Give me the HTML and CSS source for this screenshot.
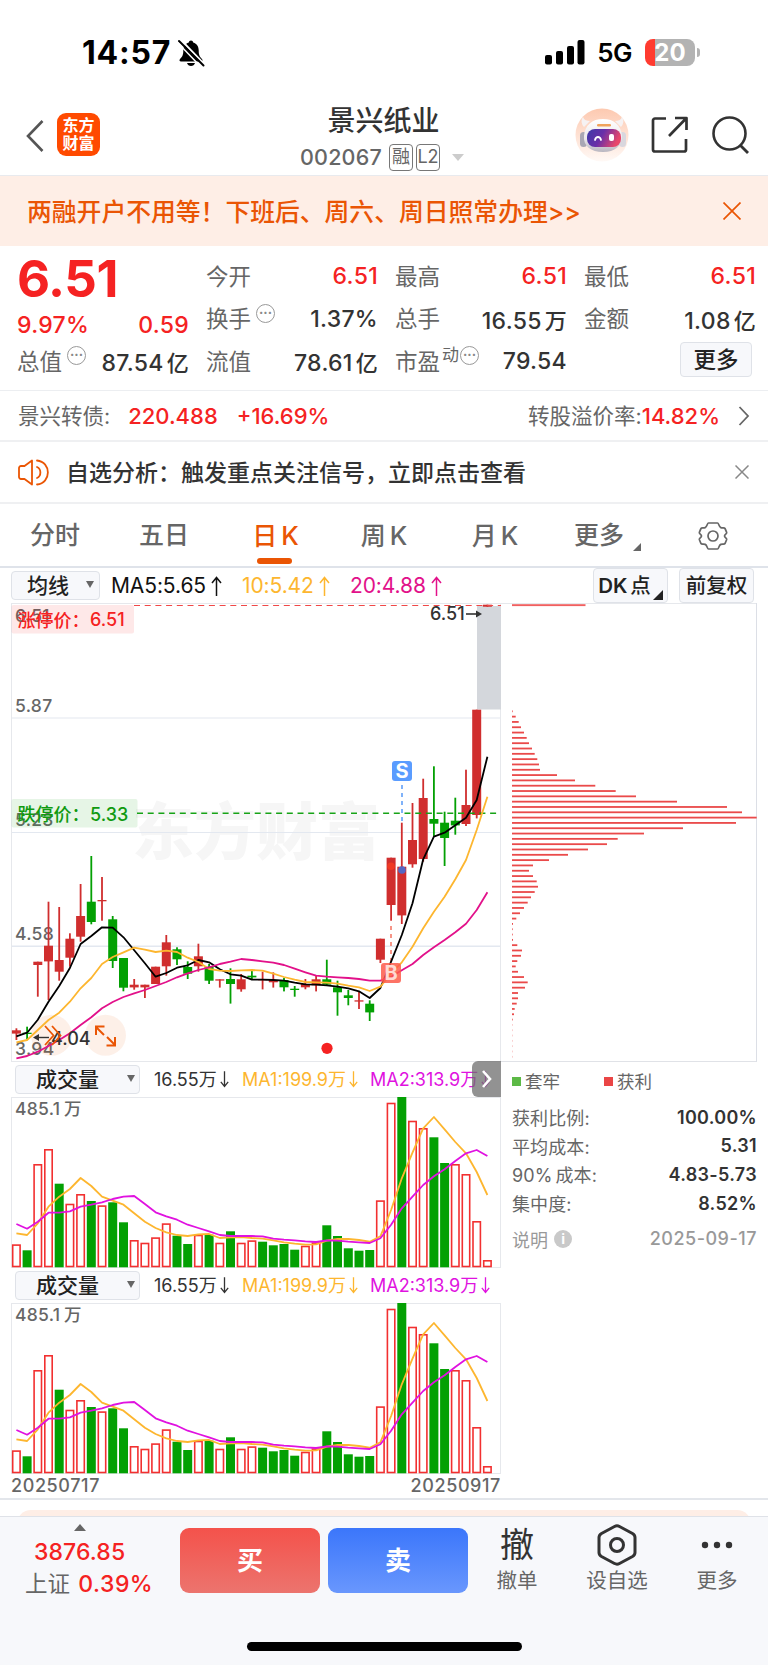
FILE: index.html
```html
<!DOCTYPE html>
<html lang="zh-CN">
	<head>
		<meta charset="UTF-8">
		<title>景兴纸业 002067</title>
		<link rel="stylesheet" href="styles.css">
	</head>
	<body>
		<svg width="0" height="0" class="defs">
			<symbol id="up" viewBox="0 0 11 20"><path d="M5.500 20V1.500M1 7l4.500-5.500L10 7" fill="none" stroke="currentColor" stroke-width="1.500"/></symbol>
			<symbol id="dn" viewBox="0 0 11 20"><path d="M5.500 0v18.500M1 13l4.500 5.500L10 13" fill="none" stroke="currentColor" stroke-width="1.600"/></symbol>
		</svg>
		<!--状态栏-->
		<div class="status">
			<span class="time">14:57</span>
			<svg class="bell" width="28" height="28" viewBox="0 0 28 28">
				<path d="M14 1.500c1.300 0 2 .8 2.200 2 3.800 1 5.500 4.200 5.500 8 0 5 1.300 6.500 3.300 8.500 1 1.200.5 2.500-1 2.500H4c-1.500 0-2-1.300-1-2.500 2-2 3.300-3.500 3.300-8.500 0-3.800 1.700-7 5.500-8 .2-1.200.9-2 2.200-2z"/>
				<path d="M10 24h8c-.6 2-2 3-4 3s-3.400-1-4-3z"/>
				<path d="M4.500 1.500L28 26" stroke="#fff" stroke-width="2"/>
				<path d="M2 2l24.500 24.500" stroke="#000" stroke-width="2" stroke-linecap="round"/>
				<path d="M.5 3.500L24 28" stroke="#fff" stroke-width="1.500"/>
			</svg>
			<svg class="signal" width="40" height="25" viewBox="0 0 40 25">
				<rect x="0" y="15" width="7" height="9.500" rx="2"/>
				<rect x="11" y="11" width="7" height="13.500" rx="2"/>
				<rect x="22" y="6" width="7" height="18.500" rx="2"/>
				<rect x="32.500" y="0" width="7" height="24.500" rx="2"/>
			</svg>
			<span class="net">5G</span>
			<div class="battery"><span>20</span></div>
			<i class="nub"></i>
		</div>

		<!--标题栏-->
		<div class="header">
			<svg class="back" width="18" height="32" viewBox="0 0 18 32"><path d="M16.500 1L2 16l14.500 15" fill="none" stroke="#555" stroke-width="2.600"/></svg>
			<div class="logo">东方<br>财富</div>
			<div class="title">
				<h1>景兴纸业</h1>
				<div class="code">
					<span class="num">002067</span><span class="tag">融</span><span class="tag">L2</span><i class="down"></i>
				</div>
			</div>
			<svg class="robot" width="54" height="54" viewBox="0 0 54 54">
				<defs>
					<linearGradient id="halo" x1="0" y1="0" x2="0" y2="1"><stop offset="0" stop-color="#fdc9b0"/><stop offset="1" stop-color="#fff9f6"/></linearGradient>
					<linearGradient id="face" x1="0" y1="0" x2="1" y2="0.300"><stop offset="0" stop-color="#3d3aa8"/><stop offset="0.500" stop-color="#6a2fa8"/><stop offset="1" stop-color="#e8476a"/></linearGradient>
					<linearGradient id="shell" x1="0" y1="0" x2="0" y2="1"><stop offset="0" stop-color="#fff"/><stop offset="0.600" stop-color="#ebe8ec"/><stop offset="1" stop-color="#b9b6c0"/></linearGradient>
				</defs>
				<circle cx="27" cy="27" r="26.500" fill="url(#halo)"/>
				<path d="M9 19c-3-3-3-8-1-10 1 3 4 4 7 4zM46 19c3-3 3-8 1-10-1 3-4 4-7 4z" fill="#f6f2f3"/>
				<rect x="5" y="24" width="7" height="15" rx="3.500" fill="#a9a7b4"/>
				<rect x="44" y="24" width="7" height="15" rx="3.500" fill="#d9d7de"/>
				<path d="M28 11c11 0 18 6 19 17 0 10-7 16-19 16S8 38 9 28c1-11 8-17 19-17z" fill="url(#shell)"/>
				<rect x="22" y="16" width="14" height="2.500" rx="1.200" fill="#f0a35b"/>
				<rect x="12" y="21" width="34" height="18" rx="8" fill="url(#face)"/>
				<path d="M20 32c1-4 5-4 6 0" fill="none" stroke="#fff" stroke-width="1.800" stroke-linecap="round"/>
				<rect x="34" y="26" width="5" height="7" rx="2" fill="#fff"/>
			</svg>
			<svg class="share" width="38" height="38" viewBox="0 0 38 38"><path d="M15 2.500H4a2 2 0 0 0-2 2v29a2 2 0 0 0 2 2h29a2 2 0 0 0 2-2V23M24 2h11.500v12M35 2.500L18 20" fill="none" stroke="#333" stroke-width="2.700" stroke-linejoin="round"/></svg>
			<svg class="search" width="38" height="40" viewBox="0 0 38 40"><circle cx="17.500" cy="18.500" r="16" fill="none" stroke="#333" stroke-width="2.600"/><path d="M28.500 30.500L36 38" stroke="#333" stroke-width="2.800"/></svg>
		</div>

		<div class="banner">
			<span>两融开户不用等！下班后、周六、周日照常办理&gt;&gt;</span>
			<svg width="18" height="18" viewBox="0 0 18 18"><path d="M.5.5l17 17M17.500.5l-17 17" stroke="#ea5504" stroke-width="1.700"/></svg>
		</div>

		<!--行情数据-->
		<div class="quote">
			<div class="price">
				<div class="big">6.51</div>
				<div class="line chg"><b class="red">9.97%</b><b class="red">0.59</b></div>
				<div class="line"><span>总值<i class="dots">···</i></span><b>87.54<em>亿</em></b></div>
			</div>
			<div class="col">
				<div class="line"><span>今开</span><b class="red">6.51</b></div>
				<div class="line"><span>换手<i class="dots">···</i></span><b>1.37%</b></div>
				<div class="line"><span>流值</span><b>78.61<em>亿</em></b></div>
			</div>
			<div class="col">
				<div class="line"><span>最高</span><b class="red">6.51</b></div>
				<div class="line"><span>总手</span><b>16.55<em>万</em></b></div>
				<div class="line"><span>市盈<sup>动</sup><i class="dots">···</i></span><b>79.54</b></div>
			</div>
			<div class="col">
				<div class="line"><span>最低</span><b class="red">6.51</b></div>
				<div class="line"><span>金额</span><b>1.08<em>亿</em></b></div>
				<div class="line more"><span class="btn">更多</span></div>
			</div>
		</div>

		<div class="bond">
			<span>景兴转债:</span><b class="b1">220.488</b><b class="b2">+16.69%</b>
			<span class="rate">转股溢价率:</span><b>14.82%</b>
			<svg width="12" height="20" viewBox="0 0 12 20"><path d="M1.500 1l8.500 9-8.500 9" fill="none" stroke="#666" stroke-width="1.800"/></svg>
		</div>

		<div class="notice">
			<svg width="31" height="27" viewBox="0 0 31 27" fill="none" stroke="#ea5504" stroke-width="1.800" stroke-linejoin="round" stroke-linecap="round">
				<path d="M14 1.500v24L6.500 20H3a2 2 0 0 1-2-2V9a2 2 0 0 1 2-2h3.500z"/>
				<path d="M19 8c4.500 2 4.500 9 0 11M19 1.500c14.500 1.500 14.500 22.500 0 24"/>
			</svg>
			<span>自选分析：触发重点关注信号，立即点击查看</span>
			<svg class="close" width="14" height="14" viewBox="0 0 14 14"><path d="M.5.5l13 13M13.500.5l-13 13" stroke="#888" stroke-width="1.500"/></svg>
		</div>

		<ul class="tabs">
			<li>分时</li>
			<li>五日</li>
			<li class="active">日<i>K</i></li>
			<li>周<i>K</i></li>
			<li>月<i>K</i></li>
			<li>更多<u></u></li>
			<li>
				<svg width="30" height="30" viewBox="0 0 30 30" fill="none" stroke="#666" stroke-width="1.700" stroke-linejoin="round">
					<path d="M10.500 2h9c1.300 0 1.300 3.800 3.300 4.600 1.800.7 3.600-.3 4.200.9.600 1.200 1.200 2.700 1.700 4 .3 1.200-2.200 1.900-2.200 3.500s2.500 2.300 2.200 3.500c-.5 1.300-1.100 2.800-1.700 4-.6 1.200-2.400.2-4.200.9-2 .8-2 4.600-3.300 4.600h-9c-1.300 0-1.300-3.800-3.300-4.600-1.800-.7-3.600.3-4.200-.9-.6-1.200-1.200-2.700-1.700-4-.3-1.200 2.200-1.900 2.200-3.500s-2.500-2.300-2.200-3.500c.5-1.300 1.100-2.800 1.700-4 .6-1.200 2.400-.2 4.200-.9 2-.8 2-4.600 3.300-4.600z"/>
					<circle cx="15" cy="15" r="5"/>
				</svg>
			</li>
		</ul>

		<!--均线-->
		<div class="toolbar">
			<div class="select">均线<i></i></div>
			<span class="ma ma5">MA5:5.65<svg width="11" height="20"><use href="#up"/></svg></span>
			<span class="ma ma10">10:5.42<svg width="11" height="20"><use href="#up"/></svg></span>
			<span class="ma ma20">20:4.88<svg width="11" height="20"><use href="#up"/></svg></span>
			<div class="key dk">DK<span>点</span><u></u></div>
			<div class="key">前复权</div>
		</div>

		<!--图表-->
		<div class="charts">
			<div class="left">
				<svg id="kline" width="490" height="459" viewBox="0 0 490 459"></svg>
				<div class="volbar">
					<div class="select">成交量<i></i></div>
					<span class="v0">16.55万<svg width="9" height="17"><use href="#dn"/></svg></span>
					<span class="v1">MA1:199.9万<svg width="9" height="17"><use href="#dn"/></svg></span>
					<span class="v2">MA2:313.9万<svg width="9" height="17"><use href="#dn"/></svg></span>
					<div class="expand"><svg width="10" height="18" viewBox="0 0 10 18"><path d="M1 1l7 8-7 8" fill="none" stroke="#fff" stroke-width="2.600"/></svg></div>
				</div>
				<svg class="vol" width="490" height="171" viewBox="0 0 490 171"></svg>
				<div class="volbar">
					<div class="select">成交量<i></i></div>
					<span class="v0">16.55万<svg width="9" height="17"><use href="#dn"/></svg></span>
					<span class="v1">MA1:199.9万<svg width="9" height="17"><use href="#dn"/></svg></span>
					<span class="v2">MA2:313.9万<svg width="9" height="17"><use href="#dn"/></svg></span>
				</div>
				<svg class="vol" width="490" height="171" viewBox="0 0 490 171"></svg>
				<div class="dates"><span>20250717</span><span>20250917</span></div>
			</div>
			<div class="right">
				<svg id="chips" width="256" height="459" viewBox="0 0 256 459"></svg>
				<div class="legend"><i class="g"></i>套牢<i class="r"></i>获利</div>
				<div class="row"><span>获利比例:</span><b>100.00%</b></div>
				<div class="row"><span>平均成本:</span><b>5.31</b></div>
				<div class="row"><span>90%<em>成本:</em></span><b>4.83-5.73</b></div>
				<div class="row"><span>集中度:</span><b>8.52%</b></div>
				<div class="row tip"><span>说明<i>i</i></span><span class="day">2025-09-17</span></div>
			</div>
		</div>

		<div class="peek"><div></div></div>

		<!--底部操作栏-->
		<div class="footer">
			<div class="index">
				<i></i>
				<b>3876.85</b>
				<div>上证 <b>0.39%</b></div>
			</div>
			<div class="trade buy">买</div>
			<div class="trade sell">卖</div>
			<div class="item i1"><div class="ico">撤</div>撤单</div>
			<div class="item i2">
				<div class="ico"><svg width="40" height="42" viewBox="0 0 40 42" fill="none" stroke="#333" stroke-width="3"><path d="M17.500 2.500q2.500-1.300 5 0L35.500 9.500q2.500 1.500 2.500 4v15q0 2.500-2.500 4l-13 7q-2.500 1.300-5 0l-13-7Q2 31 2 28.500v-15q0-2.500 2.500-4z"/><circle cx="20" cy="21" r="6.500"/></svg></div>
				设自选
			</div>
			<div class="item i3">
				<div class="ico"><svg width="32" height="8" viewBox="0 0 32 8" fill="#333"><circle cx="4" cy="4" r="3.200"/><circle cx="16" cy="4" r="3.200"/><circle cx="28" cy="4" r="3.200"/></svg></div>
				更多
			</div>
			<div class="home"></div>
		</div>
		<script src="chart.js"></script>
	</body>
</html>
```

FILE: styles.css
```css
body,ul,li,h1{
	margin: 0;
	padding: 0;
}
body{
	width: 768px;
	height: 1665px;
	overflow: hidden;
	background: #fff;
	font-family: Inter, "Noto Sans CJK SC", sans-serif;
	color: #333;
}
*{
	box-sizing: border-box;
}
li{
	list-style: none;
}
i,em,u{
	font-style: normal;
	text-decoration: none;
}
b{
	font-weight: 600;
}
svg{
	display: block;
	flex: none;
}
span,b{
	white-space: nowrap;
}
.defs{
	position: absolute;
}
/*状态栏*/
.status{
	display: flex;
	align-items: center;
	height: 105px;
	padding: 0 68px 0 82px;
	color: #000;
}
.time{
	font-size: 32px;
	font-weight: 700;
	letter-spacing: 0.8px;
}
.bell{
	margin-left: 6px;
}
.signal{
	margin-left: auto;
}
.net{
	margin-left: 12px;
	font-size: 26px;
	font-weight: 600;
	letter-spacing: -0.5px;
}
.battery{
	width: 50px;
	height: 27px;
	margin-left: 13px;
	border-radius: 8px;
	background: linear-gradient(90deg, #ff3b30 10px, #b3b3b3 10px);
	color: #fff;
	font-size: 24px;
	font-weight: 700;
	line-height: 27px;
	text-align: center;
}
.nub{
	width: 3px;
	height: 9px;
	margin-left: 2px;
	border-radius: 0 3px 3px 0;
	background: #b3b3b3;
}
/*标题栏*/
.header{
	display: flex;
	height: 71px;
	padding-left: 26px;
	border-bottom: 1px solid #e8eaee;
}
.back{
	margin-top: 15px;
}
.logo{
	width: 43px;
	height: 43px;
	margin: 8px 0 0 13px;
	padding-top: 4px;
	border-radius: 9px;
	background: #ff4a00;
	color: #fff;
	font-size: 16px;
	font-weight: 700;
	line-height: 17.500px;
	text-align: center;
}
.title{
	width: 190px;
	margin-left: 188px;
}
.title h1{
	height: 32px;
	padding-left: 1px;
	font-size: 28px;
	font-weight: 500;
	line-height: 32px;
	text-align: center;
}
.code{
	display: flex;
	align-items: center;
	height: 40px;
	margin-left: 12px;
}
.num{
	width: 89px;
	font-size: 21.500px;
	color: #666;
	font-weight: 500;
	letter-spacing: 0.2px;
}
.tag{
	width: 24px;
	height: 27px;
	margin-right: 3px;
	border: 1.500px solid #777;
	border-radius: 4px;
	font-size: 18px;
	line-height: 24px;
	text-align: center;
	color: #666;
}
.down{
	margin-left: 9px;
	border: 6.500px solid transparent;
	border-top: 7px solid #ccc;
	border-bottom: 0;
}
.robot{
	margin: 3px 0 0 97px;
}
.share{
	margin: 11px 0 0 22px;
}
.search{
	margin: 10px 0 0 23px;
}
.banner{
	display: flex;
	align-items: center;
	justify-content: space-between;
	height: 70px;
	padding: 0 27px;
	background: #feeee6;
	color: #ea5504;
	font-size: 24.800px;
	font-weight: 500;
}
.banner span{
	margin-top: -3px;
}
/*行情*/
.quote{
	display: grid;
	grid-template-columns: 172px 172px 172px 172px;
	column-gap: 17px;
	height: 145px;
	padding: 9px 0 0 17px;
	border-bottom: 1px solid #eceef1;
	font-size: 22.500px;
	color: #666;
}
.quote .line{
	display: flex;
	align-items: center;
	justify-content: space-between;
	height: 42.500px;
}
.quote .line span{
	display: flex;
	align-items: center;
	margin-top: -3px;
}
.quote b{
	font-size: 23px;
	font-weight: 500;
	color: #333;
	letter-spacing: 0.3px;
}
.quote b.red{
	color: #f52222;
}
.quote em{
	margin-left: 3px;
	font-size: 22px;
}
.big{
	height: 48px;
	font-size: 51px;
	font-weight: 700;
	line-height: 48px;
	color: #f52222;
	letter-spacing: -0.500px;
}
.price .chg{
	height: 37px;
	padding-top: 7px;
}
.dots{
	width: 19px;
	height: 19px;
	margin: 0 0 8px 5px;
	border: 1.500px solid #999;
	border-radius: 50%;
	font-size: 13px;
	font-weight: 700;
	line-height: 15px;
	text-align: center;
	color: #888;
}
sup{
	margin: 0 0 10px 2px;
	font-size: 17px;
	line-height: 20px;
}
sup + .dots{
	margin-left: 1px;
}
.quote .more{
	justify-content: flex-end;
	padding: 0 4px 0 0;
}
.quote .more .btn{
	justify-content: center;
	width: 72px;
	height: 35px;
	border: 1px solid #dfe2e8;
	border-radius: 4px;
	background: #f7f8fb;
	color: #222;
	font-weight: 500;
	line-height: 32px;
}
.bond{
	display: flex;
	align-items: center;
	height: 51px;
	padding: 0 18px;
	border-bottom: 2px solid #eff0f2;
	color: #666;
	font-size: 21.500px;
}
.bond span{
	margin-top: -2px;
}
.bond b{
	color: #f52222;
	font-size: 22px;
	font-weight: 500;
}
.bond .b1{
	margin-left: 18px;
}
.bond .b2{
	margin-left: 19px;
}
.bond .rate{
	margin-left: auto;
}
.bond svg{
	margin-left: 18px;
}
.notice{
	display: flex;
	align-items: center;
	height: 62px;
	padding: 0 19px 0 18px;
	border-bottom: 2px solid #eff0f2;
	font-size: 23px;
	font-weight: 500;
}
.notice span{
	margin: -2px 0 0 17px;
}
.notice .close{
	margin-left: auto;
}
.tabs{
	display: grid;
	grid-template-columns: 110px 108px 115px 102px 120px 88px 125px;
	height: 64px;
	border-bottom: 2px solid #dfe3ea;
	color: #666;
	font-size: 25px;
	font-weight: 500;
	line-height: 63px;
	text-align: center;
}
.tabs li{
	position: relative;
}
.tabs li i{
	margin-left: 4px;
	font-size: 25.500px;
}
.tabs .active{
	color: #ea5504;
}
.tabs .active:after{
	position: absolute;
	left: 39px;
	bottom: 4px;
	width: 35px;
	height: 6px;
	border-radius: 3px;
	background: #ea5504;
	content: "";
}
.tabs u{
	position: absolute;
	right: 2px;
	top: 39px;
	border-left: 8px solid transparent;
	border-bottom: 8px solid #666;
}
.tabs svg{
	margin: 17px 0 0 55px;
}
/*工具条*/
.toolbar{
	display: flex;
	align-items: center;
	height: 35px;
	padding: 0 14px 0 11px;
	font-size: 21px;
}
.select{
	display: flex;
	align-items: center;
	justify-content: space-between;
	width: 89px;
	height: 29px;
	padding: 0 5px 3px 15px;
	border: 1px solid #dfe2e8;
	border-radius: 4px;
	background: #f7f8fb;
	color: #222;
	font-size: 21px;
	font-weight: 500;
}
.select i{
	border: 4px solid transparent;
	border-top: 7px solid #666;
	border-bottom: 0;
}
.ma{
	flex: none;
	display: flex;
	align-items: center;
	font-size: 21px;
	letter-spacing: -0.1px;
	color: #111;
}
.ma5{
	width: 131px;
	margin-left: 11px;
}
.ma10{
	width: 108px;
	color: #fdb62f;
}
.ma20{
	color: #e2118a;
}
.ma svg{
	margin-left: 5px;
}
.key{
	position: relative;
	width: 75px;
	height: 35px;
	margin-left: 11px;
	border: 1px solid #dfe2e8;
	border-radius: 4px;
	background: #f7f8fb;
	color: #222;
	font-size: 20.500px;
	font-weight: 500;
	line-height: 33px;
	text-align: center;
}
.key.dk{
	margin-left: auto;
	padding-right: 12px;
	font-weight: 600;
	white-space: nowrap;
}
.dk span{
	margin-left: 3px;
	font-weight: 500;
}
.key u{
	position: absolute;
	right: 4px;
	bottom: 2px;
	border-left: 10px solid transparent;
	border-bottom: 10px solid #222;
}
/*图表*/
.charts{
	display: flex;
	height: 897px;
	padding-left: 11px;
	border-bottom: 2px solid #e3e6eb;
}
.left{
	width: 490px;
}
.volbar{
	position: relative;
	display: flex;
	align-items: center;
	height: 35px;
	padding-left: 4px;
	font-size: 18px;
}
.volbar .select{
	width: 125px;
	margin-top: -1px;
	padding: 0 4px 2px 20px;
}
.volbar span{
	display: flex;
	align-items: center;
	margin-top: -3px;
}
.volbar span svg{
	margin: 3px 0 0 3px;
}
.v0{
	width: 88px;
	margin-left: 14px;
}
.v1{
	width: 128px;
	color: #fdb62f;
}
.v2{
	color: #e012e0;
}
.expand{
	position: absolute;
	right: 0;
	top: -1px;
	display: flex;
	align-items: center;
	justify-content: center;
	width: 29px;
	height: 36px;
	border-radius: 6px 0 0 6px;
	background: rgba(110,110,110,.75);
}
.dates{
	display: flex;
	justify-content: space-between;
	font-size: 18px;
	font-weight: 500;
	color: #666;
	line-height: 24px;
	letter-spacing: 0.600px;
}
.right{
	width: 256px;
	font-size: 18px;
	color: #666;
}
.legend{
	display: flex;
	align-items: center;
	height: 38px;
	padding: 0 0 1px 11px;
	font-size: 17.500px;
}
.legend i{
	width: 9px;
	height: 9px;
	margin: 1px 4px 0 0;
	background: #5cb946;
}
.legend .r{
	margin-left: 44px;
	background: #ea4545;
}
.row{
	display: flex;
	align-items: center;
	justify-content: space-between;
	height: 28.600px;
	padding: 0 0 0 11px;
	letter-spacing: 0.1px;
}
.legend + .row{
	margin-top: 3px;
}
.row em{
	margin-left: 3px;
}
.row b{
	color: #333;
	font-weight: 600;
	letter-spacing: 0.3px;
}
.row.tip{
	margin-top: 7px;
	color: #999;
}
.tip span{
	display: flex;
	align-items: center;
}
.tip i{
	width: 18px;
	height: 18px;
	margin-left: 6px;
	border-radius: 50%;
	background: #c9c9c9;
	color: #fff;
	font-size: 14px;
	font-weight: 700;
	line-height: 18px;
	text-align: center;
}
.tip .day{
	font-weight: 500;
	letter-spacing: 0.5px;
}
.peek{
	height: 16px;
	padding: 10px 17px 0;
	overflow: hidden;
}
.peek div{
	height: 40px;
	border-radius: 14px;
	background: #feeee6;
}
/*底部*/
.footer{
	position: relative;
	display: flex;
	height: 149px;
	border-top: 1px solid #dfe2e8;
	background: #f7f8fb;
}
.index{
	width: 180px;
	padding: 0 0 0 25px;
	font-size: 22.500px;
	color: #666;
	line-height: 31px;
}
.index i{
	display: block;
	width: 0;
	margin: 7px 0 5px 49px;
	border: 6.500px solid transparent;
	border-bottom: 7px solid #666;
	border-top: 0;
}
.index b{
	color: #f52222;
	font-size: 23px;
	font-weight: 500;
	letter-spacing: 0.1px;
}
.index div b{
	margin-left: 2px;
	letter-spacing: 0.500px;
}
.index > b{
	margin-left: 9px;
}
.trade{
	width: 140px;
	height: 65px;
	margin-top: 11px;
	border-radius: 9px;
	color: #fff;
	font-size: 26px;
	font-weight: 700;
	line-height: 65px;
	text-align: center;
}
.buy{
	background: linear-gradient(#f4524b, #ec746e);
}
.sell{
	margin-left: 8px;
	background: linear-gradient(#3b76fb, #6997fd);
}
.item{
	width: 80px;
	font-size: 20.500px;
	color: #666;
	line-height: 30px;
	text-align: center;
}
.ico{
	display: flex;
	align-items: center;
	justify-content: center;
	height: 49px;
	padding-top: 7px;
	font-size: 34px;
	color: #333;
}
.i1{
	margin-left: 9px;
}
.i2{
	margin-left: 20px;
}
.i3{
	margin-left: 20px;
}
.home{
	position: absolute;
	left: 247px;
	bottom: 14px;
	width: 275px;
	height: 9px;
	border-radius: 5px;
	background: #000;
}
/*svg文字*/
.axis{
	font-size: 17.500px;
	font-weight: 500;
	letter-spacing: 0.3px;
	fill: #666;
}
.mark{
	font-size: 18px;
	font-weight: 500;
	fill: #333;
}
.limit{
	font-size: 18px;
	font-weight: 500;
}
.water{
	font-size: 62px;
	font-weight: 900;
	fill: #f6f6f6;
}
.flag{
	font-size: 20px;
	font-weight: 700;
	fill: #fff;
	text-anchor: middle;
}
```

FILE: chart.js
```js
var RED = "#d02e2e", GREEN = "#03a003";
var STEP = 10.705, X0 = 5.4;

// 涨跌, 实体上, 实体下, 影线上, 影线下  (1/3像素)
var candles = [
	["r",601,611,595,630],["g",608,612,590,628],["r",395,405,395,500],["r",347,394,215,510],["r",390,425,231,452],
	["r",326,383,310,410],["r",258,320,162,335],["g",215,276,78,283],["r",210,214,141,272],["g",268,393,258,414],
	["g",384,473,384,484],["r",464,472,447,479],["r",464,472,464,504],["r",410,462,410,462],["r",337,409,315,437],
	["g",358,388,352,405],["g",411,431,394,447],["r",379,409,341,425],["g",410,452,402,462],["r",448,452,448,473],
	["g",447,462,415,521],["r",448,478,432,485],["g",437,442,421,448],["r",447,451,425,478],["r",450,457,427,473],
	["g",450,472,443,484],["g",476,480,468,500],["r",462,472,447,478],["r",448,466,437,484],["g",448,464,389,468],
	["g",472,487,452,557],["g",496,504,480,526],["r",511,515,485,537],["g",521,547,511,573],["r",326,389,326,399],
	["r",83,225,83,272],["r",110,256,-22,282],["r",30,103,-81,113],["r",-96,87,-154,95],["g",-33,-19,-191,20],
	["g",-22,24,-55,108],["g",-28,-14,-97,14],["r",-75,-18,-181,-12],["r",-361,-45,-361,-35],["r",-676,-670,-676,-670]
];
var ma5 = [619,608,569,515,468,414,342,318,292,293,322,361,400,440,429,413,406,390,397,418,433,437,449,449,450,452,458,463,464,466,470,475,484,504,474,395,315,220,88,20,8,-14,-37,-90,-220];
var ma10 = [637,630,600,570,548,515,475,444,402,381,367,353,359,366,362,366,383,396,417,422,423,421,420,422,431,441,449,456,457,458,461,467,472,483,470,430,397,350,295,245,200,148,90,0,-100];
var ma20 = [685,678,665,648,630,610,585,562,535,516,501,490,480,468,456,442,430,420,412,402,395,387,390,394,398,405,416,427,437,440,442,444,447,452,452,440,421,402,375,352,330,307,281,240,187];

// 成交量
var vols = [553,571,312,267,371,431,402,423,436,427,487,540,548,532,490,527,552,524,524,548,514,548,541,545,556,552,569,557,547,496,528,565,572,570,421,128,111,182,204,232,309,312,342,483,600];
var volUp = "r g r r g r r g r g g r r r r g g r g r g r r g g g g r r g g g g g r r g r r g g r r r r".split(" ");
var v1 = [520,525,490,440,410,387,354,378,410,422,434,460,485,504,517,525,528,523,522,534,532,531,534,536,541,547,551,554,553,542,537,537,540,545,529,450,355,278,205,171,208,246,280,336,405];
var v2 = [492,506,485,458,458,454,440,434,427,417,410,408,432,457,469,479,494,504,514,525,528,528,528,529,536,539,541,544,546,541,542,545,547,549,535,494,445,410,375,349,328,303,280,270,288];

// 筹码分布, 每档右端
var chips = [23,32,41,48,57,65,72,81,89,97,102,105,156,210,271,332,393,516,666,711,755,693,534,417,338,306,249,189,132,84,72,84,95,99,89,78,68,57,45,34,24,23,23,24,37,51,48,37,32,39,57,68,60,39,39,35,29,27,23];

function rect(x, y, w, h, fill, more){
	return '<rect x="' + x + '" y="' + y + '" width="' + w + '" height="' + h + '" fill="' + fill + '" ' + (more || "") + '/>';
}
function seg(x1, y1, x2, y2, color, w, dash){
	return '<path d="M' + x1 + ' ' + y1 + 'L' + x2 + ' ' + y2 + '" stroke="' + color + '" stroke-width="' + w + '"' + (dash ? ' stroke-dasharray="' + dash + '"' : "") + '/>';
}
function text(x, y, s, cls, fill){
	return '<text x="' + x + '" y="' + y + '" class="' + cls + '"' + (fill ? ' style="fill:' + fill + '"' : "") + '>' + s + '</text>';
}
function line(arr, toY, color){
	var p = [];
	for(var i = 0; i < arr.length; i++){
		p.push((X0 + i*STEP).toFixed(1) + "," + toY(arr[i]).toFixed(1));
	}
	return '<polyline points="' + p.join(" ") + '" fill="none" stroke="' + color + '" stroke-width="1.8" stroke-linejoin="round"/>';
}
function ky(v){
	return 227 + v/3;
}
function vy(v){
	return (v - 111)/3;
}

function drawKline(){
	var h = "", i, c, x, col;
	h += text(121, 252, "东方财富", "water");
	h += seg(0, 115, 490, 115, "#e3e8f0", 1.2) + seg(0, 229.5, 490, 229.5, "#e3e8f0", 1.2) + seg(0, 343.2, 490, 343.2, "#e3e8f0", 1.4);
	h += rect(0.5, 0.5, 489, 458, "none", 'stroke="#e6e8ec"');
	h += rect(466, 3, 24, 103.5, "#d4d7dc");
	h += text(4, 19, "6.51", "axis") + text(4, 109, "5.87", "axis") + text(4, 223, "5.23", "axis") + text(4, 337, "4.58", "axis") + text(4, 452, "3.94", "axis");
	h += '<circle cx="40.5" cy="432.300" r="20.500" fill="#ea5504" fill-opacity="0.090"/><circle cx="94.5" cy="432.300" r="20.500" fill="#ea5504" fill-opacity="0.090"/>';
	for(i = 0; i < candles.length; i++){
		c = candles[i];
		x = X0 + i*STEP;
		col = c[0] == "r" ? RED : GREEN;
		h += rect((x - 0.9).toFixed(1), ky(c[3]).toFixed(1), 1.8, ((c[4] - c[3])/3).toFixed(1), col);
		h += rect((x - 4.5).toFixed(1), ky(c[1]).toFixed(1), 9, ((c[2] - c[1])/3).toFixed(1), col);
	}
	h += seg(123, 2.5, 490, 2.5, "#f04848", 1.2, "6 4.7") + seg(126, 210.3, 486, 210.3, "#17a317", 1.5, "6 4.7");
	h += seg(391, 182, 391, 219, "#6aa5f8", 1.7, "4 4") + seg(380, 323, 380, 360, "#f58373", 1.7, "4 4");
	h += line(ma5, ky, "#000") + line(ma10, ky, "#fdb62f") + line(ma20, ky, "#e2118a");
	h += '<circle cx="380" cy="263.300" r="3.800" fill="#f03a24"/><circle cx="391" cy="267" r="3.800" fill="#5566c4"/><circle cx="316" cy="445.300" r="5.600" fill="#f52222"/>';
	h += rect(381, 158, 20, 20, "#5a9cff", 'rx="3"') + text(391, 175.2, "S", "flag");
	h += rect(370, 360, 20, 20, "#fd5a4a", 'rx="3" fill-opacity="0.850"') + text(380, 377.2, "B", "flag", "#ffd9d2");
	// 涨停 跌停
	h += rect(0.5, 2, 122.5, 28.5, "#f52222", 'rx="2" fill-opacity="0.100"') + text(6.5, 23.5, "涨停价：", "limit", "#f52222") + text(79, 23, "6.51", "limit", "#f52222");
	h += rect(0.5, 196, 126, 28.5, "#17a317", 'rx="2" fill-opacity="0.110"') + text(6.5, 218, "跌停价：", "limit", "#109a10") + text(79, 217.500, "5.33", "limit", "#109a10");
	h += text(419, 17, "6.51", "mark") + seg(455, 11, 469, 11, "#333", 1.6) + '<path d="M465 7.500l6 3.500-6 3.500z" fill="#333"/>';
	h += text(40, 442, "4.04", "mark") + seg(24, 434.5, 38, 434.5, "#333", 1.4) + '<path d="M28 431l-6 3.500 6 3.500z" fill="#333"/>';
	h += '<g fill="none" stroke="#ea5504" stroke-width="1.800"><path d="M34 423l8.500 9.500-8.500 9.500M41 423l8.500 9.500-8.500 9.500"/>';
	h += '<path d="M93 432l-8-8M85 432v-8.500h8.500M96 434l8 8M104 434v8.500h-8.500" stroke-width="2"/></g>';
	document.getElementById("kline").innerHTML = h;
}

function drawVol(el){
	var h = "", i, x, y;
	h += rect(0.5, 0.5, 489, 170, "none", 'stroke="#e6e8ec"');
	for(i = 0; i < vols.length; i++){
		x = X0 + i*STEP;
		y = vy(vols[i]);
		if(volUp[i] == "g"){
			h += rect((x - 4.5).toFixed(1), y.toFixed(1), 9, (170.3 - y).toFixed(1), GREEN);
		}else{
			h += rect((x - 3.7).toFixed(1), (y + 0.8).toFixed(1), 7.4, (168.7 - y).toFixed(1), "#fff", 'stroke="#f23030" stroke-width="1.600"');
		}
	}
	h += line(v1, vy, "#fdb62f") + line(v2, vy, "#e012e0");
	h += text(4, 17.5, "485.1", "axis") + text(53, 17.5, "万", "axis");
	el.innerHTML = h;
}

function drawChips(){
	var h = "", i;
	h += seg(0, 0.5, 256, 0.5, "#e6e8ec", 1) + seg(0, 458.5, 256, 458.5, "#e0e2e7", 1) + seg(255.5, 0, 255.5, 459, "#dcdfe6", 1);
	h += rect(11, 1.2, 73.5, 1.9, "#f06060");
	for(i = 0; i < chips.length; i++){
		h += rect(11, (107.4 + i*5.315).toFixed(2), ((chips[i] - 21)/3).toFixed(1), 1.8, "#ea4a4a");
	}
	for(; i < 66; i++){
		h += rect(11, (107.4 + i*5.315).toFixed(2), 0.5, 1.8, "#f3a0a0");
	}
	document.getElementById("chips").innerHTML = h;
}

drawKline();
drawChips();
var aVol = document.getElementsByClassName("vol");
for(var k = 0; k < aVol.length; k++){
	drawVol(aVol[k]);
}
```
